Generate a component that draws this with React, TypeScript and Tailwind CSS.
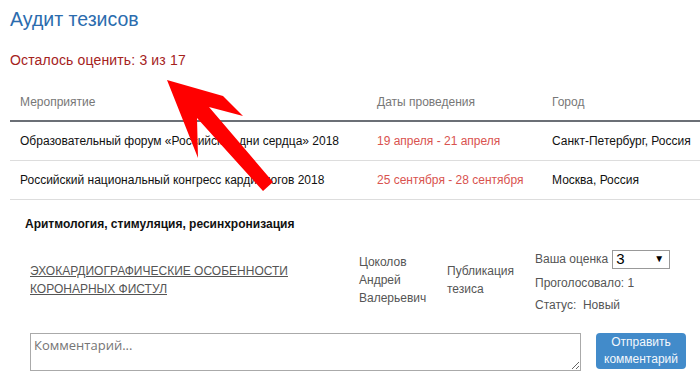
import React from 'react';

const events = [
  {
    name: 'Образовательный форум «Российские дни сердца» 2018',
    dates: '19 апреля - 21 апреля',
    city: 'Санкт-Петербург, Россия',
  },
  {
    name: 'Российский национальный конгресс кардиологов 2018',
    dates: '25 сентября - 28 сентября',
    city: 'Москва, Россия',
  },
];

function Arrow() {
  // red annotation arrow drawn on top of the page
  return (
    <svg className="absolute left-0 top-0 pointer-events-none" width="700" height="382">
      <polygon
        fill="#ff0000"
        points="167,80 223,96 243,116 209,107 273,182 263,191 197,118 198,158"
      />
    </svg>
  );
}

export default function App() {
  return (
    <div className="relative w-[700px] h-[382px] overflow-hidden bg-white font-['Liberation_Sans',Arial,sans-serif] text-[12px] text-[#111]">
      <div className="pl-[10px] pt-[8px]">
        <h1 className="text-[19.5px] leading-[22px] text-[#2b6cae]">Аудит тезисов</h1>
        <p className="mt-[21px] text-[14px] leading-[18px] tracking-[0.15px] text-[#a5221c]">Осталось оценить: 3 из 17</p>

        <div className="mt-[15px] w-[690px]">
          <div className="grid grid-cols-[357px_175px_1fr] h-[38px] items-center border-b-2 border-[#6b6f76] text-[#777]">
            <div className="pl-[10px]">Мероприятие</div>
            <div className="pl-[10px]">Даты проведения</div>
            <div className="pl-[10px]">Город</div>
          </div>
          {events.map((ev) => (
            <div
              key={ev.name}
              className="grid grid-cols-[357px_175px_1fr] h-[39px] items-center border-b border-[#ddd]"
            >
              <div className="pl-[10px] whitespace-nowrap">{ev.name}</div>
              <div className="pl-[10px] whitespace-nowrap text-[#d9534f]">{ev.dates}</div>
              <div className="pl-[10px] whitespace-nowrap">{ev.city}</div>
            </div>
          ))}
        </div>

        <div className="mt-[16px] pl-[15px] font-bold leading-[16px]">Аритмология, стимуляция, ресинхронизация</div>

        <div className="mt-[13px] flex items-center text-[#555] leading-[18px]">
          <div className="ml-[20px] w-[329px] pr-[14px]">
            <a href="#" className="underline">ЭХОКАРДИОГРАФИЧЕСКИЕ ОСОБЕННОСТИ КОРОНАРНЫХ ФИСТУЛ</a>
          </div>
          <div className="w-[88px]">
            <div>Цоколов</div>
            <div>Андрей</div>
            <div>Валерьевич</div>
          </div>
          <div className="w-[88px]">
            <div>Публикация</div>
            <div>тезиса</div>
          </div>
          <div className="flex flex-col pt-[4px]">
            <div className="flex items-center h-[20px]">
              <span>Ваша оценка</span>
              <div className="ml-[4px] w-[58px] h-[19px] border border-[#999] flex items-center justify-between pl-[3px] pr-[5px] text-black">
                <span className="text-[15px]">3</span>
                <span className="text-[10px]">▼</span>
              </div>
            </div>
            <div className="mt-[5px]">Проголосовало: 1</div>
            <div className="mt-[4px] whitespace-pre">Статус:  Новый</div>
          </div>
        </div>

        <div className="mt-[19px] flex items-start">
          <textarea
            placeholder="Комментарий..."
            className="ml-[20px] w-[551px] h-[38px] border border-[#aaa] px-[3px] pt-[2px] font-['Open_Sans',sans-serif] text-[13px] leading-[18px] placeholder:text-[#757575] outline-none"
          />
          <button className="ml-[15px] w-[90px] h-[36px] rounded-[4px] bg-[#428bca] text-[#f4f8fc] text-[12px] leading-[17px]">
            Отправить комментарий
          </button>
        </div>
      </div>
      <Arrow />
    </div>
  );
}
